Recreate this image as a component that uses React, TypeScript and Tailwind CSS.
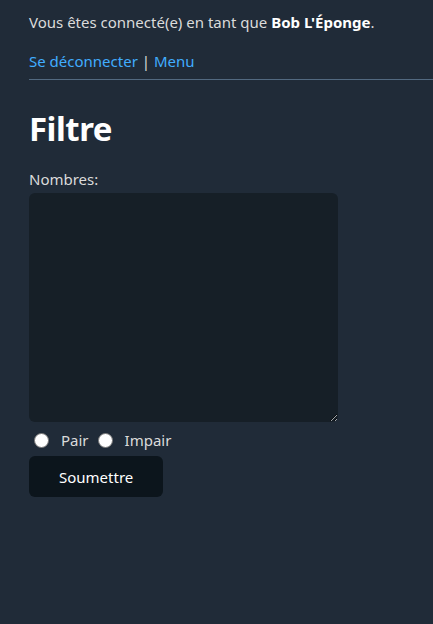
export default function App() {
  return (
    <main
      className="min-h-[624px] bg-[#202b38] pl-[29px] pt-[11px] text-[15px] leading-[22px] text-[#dbdbdb]"
      style={{ fontFamily: '"Noto Sans", "Open Sans", sans-serif' }}
    >
      <p>
        Vous êtes connecté(e) en tant que <strong className="font-bold text-white">Bob L'Éponge</strong>.
      </p>
      <p className="mt-[17px]">
        <a href="#" className="text-[#41adff]">
          Se déconnecter
        </a>{" "}
        |{" "}
        <a href="#" className="text-[#41adff]">
          Menu
        </a>
      </p>
      <hr className="mt-[7px] border-0 border-t border-[#526980]" />

      <h1 className="mt-[28px] text-[33px] font-bold leading-[42px] tracking-[-0.5px] text-white">Filtre</h1>

      <form className="mt-[18px]">
        <label htmlFor="nombres" className="block">
          Nombres:
        </label>
        <textarea
          id="nombres"
          className="mt-[3px] block h-[229px] w-[309px] rounded-[6px] bg-[#161f27] p-[10px] text-[#dbdbdb] outline-none"
        />
        <div className="mt-[7px] flex h-[22px] items-center">
          <label className="flex items-center">
            <input
              type="radio"
              name="type"
              className="ml-[5px] mr-[12px] h-[15px] w-[15px] appearance-none rounded-full border border-[#767676] bg-white"
            />
            Pair
          </label>
          <label className="ml-[9px] flex items-center">
            <input
              type="radio"
              name="type"
              className="mr-[12px] h-[15px] w-[15px] appearance-none rounded-full border border-[#767676] bg-white"
            />
            Impair
          </label>
        </div>
        <button
          type="submit"
          className="mt-[5px] block h-[41px] rounded-[6px] bg-[#0c151c] px-[30px] text-white"
        >
          Soumettre
        </button>
      </form>
    </main>
  );
}
